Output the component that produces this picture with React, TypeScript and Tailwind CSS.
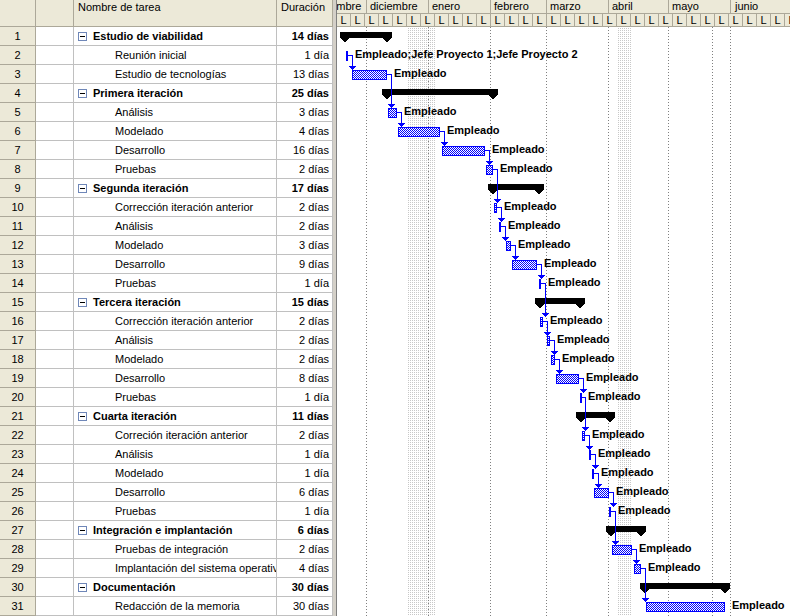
import React from 'react';

type Row = { name: string; dur: string; sum?: boolean };

const rows: Row[] = [
  { name: 'Estudio de viabilidad', dur: '14 días', sum: true },
  { name: 'Reunión inicial', dur: '1 día' },
  { name: 'Estudio de tecnologías', dur: '13 días' },
  { name: 'Primera iteración', dur: '25 días', sum: true },
  { name: 'Análisis', dur: '3 días' },
  { name: 'Modelado', dur: '4 días' },
  { name: 'Desarrollo', dur: '16 días' },
  { name: 'Pruebas', dur: '2 días' },
  { name: 'Segunda iteración', dur: '17 días', sum: true },
  { name: 'Corrección iteración anterior', dur: '2 días' },
  { name: 'Análisis', dur: '2 días' },
  { name: 'Modelado', dur: '3 días' },
  { name: 'Desarrollo', dur: '9 días' },
  { name: 'Pruebas', dur: '1 día' },
  { name: 'Tercera iteración', dur: '15 días', sum: true },
  { name: 'Corrección iteración anterior', dur: '2 días' },
  { name: 'Análisis', dur: '2 días' },
  { name: 'Modelado', dur: '2 días' },
  { name: 'Desarrollo', dur: '8 días' },
  { name: 'Pruebas', dur: '1 día' },
  { name: 'Cuarta iteración', dur: '11 días', sum: true },
  { name: 'Correción iteración anterior', dur: '2 días' },
  { name: 'Análisis', dur: '1 día' },
  { name: 'Modelado', dur: '1 día' },
  { name: 'Desarrollo', dur: '6 días' },
  { name: 'Pruebas', dur: '1 día' },
  { name: 'Integración e implantación', dur: '6 días', sum: true },
  { name: 'Pruebas de integración', dur: '2 días' },
  { name: 'Implantación del sistema operativo', dur: '4 días' },
  { name: 'Documentación', dur: '30 días', sum: true },
  { name: 'Redacción de la memoria', dur: '30 días' },
];

// page x coordinates, [left, right)
const bars: Record<number, [number, number]> = {
  2: [346, 348],
  3: [352, 387],
  5: [388, 397],
  6: [398, 440],
  7: [442, 485],
  8: [486, 493],
  10: [494, 497],
  11: [499, 501],
  12: [506, 511],
  13: [512, 537],
  14: [539, 541],
  16: [540, 543],
  17: [547, 550],
  18: [551, 555],
  19: [556, 579],
  20: [580, 581],
  22: [582, 585],
  23: [589, 591],
  24: [592, 594],
  25: [594, 609],
  26: [609, 611],
  28: [612, 632],
  29: [634, 641],
  31: [646, 725],
};

const summaries: Record<number, [number, number]> = {
  1: [340, 392],
  4: [382, 498],
  9: [488, 544],
  15: [535, 585],
  21: [576, 615],
  27: [606, 646],
  30: [640, 730],
};

const links: [number, number][] = [
  [2, 3], [3, 5], [5, 6], [6, 7], [7, 8], [8, 10], [10, 11], [11, 12], [12, 13], [13, 14],
  [14, 16], [16, 17], [17, 18], [18, 19], [19, 20], [20, 22], [22, 23], [23, 24], [24, 25],
  [25, 26], [26, 28], [28, 29], [29, 31],
];

const months = [
  { label: 'diciembre', w: 'w-[62px]' },
  { label: 'enero', w: 'w-[62px]' },
  { label: 'febrero', w: 'w-[56px]' },
  { label: 'marzo', w: 'w-[62px]' },
  { label: 'abril', w: 'w-[60px]' },
  { label: 'mayo', w: 'w-[62px]' },
];

const gridLines = [366, 428, 490, 546, 608, 668, 712, 730];

const top = (r: number) => 26 + (r - 1) * 19;

function GanttBody() {
  return (
    <svg width={453} height={589} viewBox="337 27 453 589" shapeRendering="crispEdges" className="block">
      <defs>
        <pattern id="hatch" width="2" height="2" patternUnits="userSpaceOnUse">
          <rect width="2" height="2" fill="#ffffff" />
          <rect width="1" height="1" fill="#0000ff" />
          <rect x="1" y="1" width="1" height="1" fill="#0000ff" />
        </pattern>
        <pattern id="shade" width="2" height="2" patternUnits="userSpaceOnUse">
          <rect width="2" height="2" fill="#ffffff" />
          <rect width="1" height="1" fill="#c8c8c8" />
        </pattern>
      </defs>

      <rect x="407" y="27" width="29" height="589" fill="url(#shade)" />
      <rect x="617" y="27" width="15" height="589" fill="url(#shade)" />

      {gridLines.map((x) => (
        <line key={x} x1={x + 0.5} y1={27} x2={x + 0.5} y2={616} stroke="#808080" strokeDasharray="1 2" />
      ))}

      {Object.entries(summaries).map(([r, [x1, x2]]) => {
        const t = top(Number(r));
        const pts = [
          [x1, t + 6], [x2, t + 6], [x2, t + 12], [x2 - 5, t + 16.5], [x2 - 10, t + 12],
          [x1 + 10, t + 12], [x1 + 5, t + 16.5], [x1, t + 12],
        ].map((p) => p.join(',')).join(' ');
        return <polygon key={r} points={pts} fill="#000000" />;
      })}

      {Object.entries(bars).map(([r, [x1, x2]]) => {
        const t = top(Number(r));
        return (
          <rect key={r} x={x1 + 0.5} y={t + 6.5} width={Math.max(x2 - x1 - 1, 0.5)} height={9} fill="url(#hatch)" stroke="#0000ff" />
        );
      })}

      {links.map(([a, b]) => {
        const [, ax2] = bars[a];
        const x = ax2 + 4;
        const y1 = top(a) + 10;
        const y2 = top(b) + 6;
        return (
          <g key={`${a}-${b}`}>
            <path d={`M${ax2} ${y1 + 0.5} H${x + 0.5} V${y2 - 4}`} stroke="#0000ff" fill="none" />
            <polygon points={`${x - 3.5},${y2 - 4} ${x + 4.5},${y2 - 4} ${x + 0.5},${y2 + 0.5}`} fill="#0000ff" />
          </g>
        );
      })}

      <g shapeRendering="auto" className="font-['Liberation_Sans',Arial,sans-serif] text-[11px] font-bold" fill="#000000">
        {Object.entries(bars).map(([r, [, x2]]) => (
          <text key={r} x={x2 + 7} y={top(Number(r)) + 13}>
            {r === '2' ? 'Empleado;Jefe Proyecto 1;Jefe Proyecto 2' : 'Empleado'}
          </text>
        ))}
      </g>
    </svg>
  );
}

function MinusBox() {
  return (
    <div className="ml-[4px] flex h-[9px] w-[9px] shrink-0 items-center justify-center border border-[#6f87b8] bg-white">
      <div className="h-px w-[5px] bg-black" />
    </div>
  );
}

export default function App() {
  return (
    <div className="flex h-[616px] w-[790px] overflow-hidden bg-white font-['Liberation_Sans',Arial,sans-serif] text-[11px] text-black">
      {/* task table */}
      <div className="flex w-[333px] shrink-0 flex-col">
        <div className="flex h-[27px] shrink-0 border-b border-[#aca899] bg-[#ece9d8]">
          <div className="w-[36px] border-r border-[#aca899]" />
          <div className="w-[38px] border-r border-[#aca899]" />
          <div className="w-[203px] border-r border-[#aca899] pl-[4px] pt-[1px] leading-[13px]">Nombre de tarea</div>
          <div className="w-[56px] overflow-hidden whitespace-nowrap border-r border-[#aca899] pl-[4px] pt-[1px] leading-[13px]">Duración</div>
        </div>
        {rows.map((r, i) => (
          <div key={i} className="flex h-[19px] shrink-0 leading-[18px]">
            <div className="w-[36px] border-r border-b border-[#aca899] bg-[#ece9d8] text-center">{i + 1}</div>
            <div className="w-[38px] border-r border-b border-[#c0c0c0]" />
            <div className="flex w-[203px] items-center overflow-hidden whitespace-nowrap border-r border-b border-[#c0c0c0]">
              {r.sum ? (
                <>
                  <MinusBox />
                  <span className="ml-[6px] font-bold">{r.name}</span>
                </>
              ) : (
                <span className="pl-[41px]">{r.name}</span>
              )}
            </div>
            <div className={`w-[56px] border-r border-b border-[#c0c0c0] pr-[3px] text-right ${r.sum ? 'font-bold' : ''}`}>{r.dur}</div>
          </div>
        ))}
      </div>

      {/* splitter */}
      <div className="w-[4px] shrink-0 border-r border-[#808080] bg-[#d4d0c8]" />

      {/* gantt */}
      <div className="flex min-w-0 flex-1 flex-col">
        <div className="flex h-[14px] shrink-0 overflow-hidden whitespace-nowrap border-b border-[#aca899] bg-[#ece9d8] leading-[13px]">
          <div className="w-[30px] shrink-0 overflow-hidden border-r border-[#aca899]">
            <span className="ml-[-27px]">noviembre</span>
          </div>
          {months.map((m) => (
            <div key={m.label} className={`${m.w} shrink-0 border-r border-[#aca899] pl-[3px]`}>{m.label}</div>
          ))}
          <div className="flex-1 pl-[4px]">junio</div>
        </div>
        <div className="flex h-[13px] shrink-0 overflow-hidden border-b border-[#aca899] bg-[#ece9d8] leading-[12px]">
          {Array.from({ length: 33 }).map((_, i) => (
            <div key={i} className="w-[14px] shrink-0 border-r border-[#aca899] text-center">L</div>
          ))}
        </div>
        <GanttBody />
      </div>
    </div>
  );
}
